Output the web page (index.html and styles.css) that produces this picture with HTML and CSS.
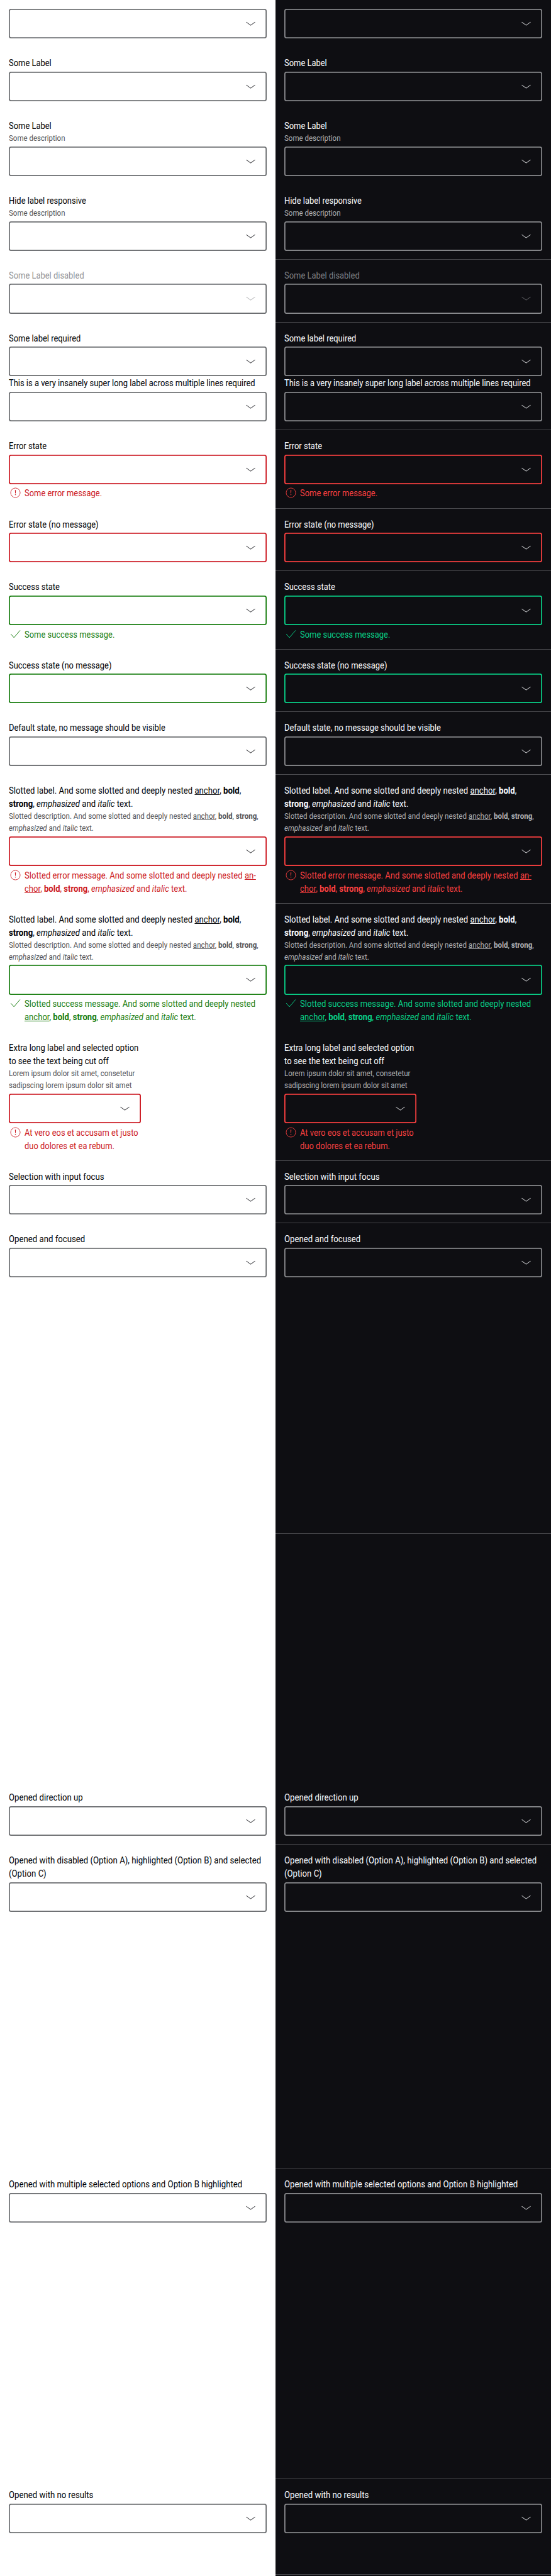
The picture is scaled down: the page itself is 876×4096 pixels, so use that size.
FILE: index.html
```
<!DOCTYPE html>
<html lang="en">
<head>
<meta charset="utf-8">
<title>Multi select states</title>
<link rel="stylesheet" href="styles.css">
</head>
<body>
<svg class="sprite" aria-hidden="true">
  <symbol id="chevron" viewBox="0 0 24 24"><path d="M4 9.2L12 15L20 9.2" fill="none" stroke="currentColor" stroke-width="1.2"/></symbol>
  <symbol id="error" viewBox="0 0 24 24"><circle cx="12" cy="12" r="8.6" fill="none" stroke="currentColor"/><path d="M11.2 7h1.6l-.3 6.2h-1z M11.2 14.8h1.6v1.6h-1.6z" fill="currentColor"/></symbol>
  <symbol id="check" viewBox="0 0 24 24"><path d="M3.7 11.6L9.3 18.1L20.4 5" fill="none" stroke="currentColor" stroke-width="1.1"/></symbol>
</svg>
<main class="board">
  <div class="column light" id="light">
    <section class="item"><div class="select"><svg class="icon"><use href="#chevron"/></svg></div></section>
    <section class="item"><p class="label">Some Label</p><div class="select"><svg class="icon"><use href="#chevron"/></svg></div></section>
    <section class="item"><p class="label">Some Label</p><p class="desc">Some description</p><div class="select"><svg class="icon"><use href="#chevron"/></svg></div></section>
    <section class="item line"><p class="label">Hide label responsive</p><p class="desc">Some description</p><div class="select"><svg class="icon"><use href="#chevron"/></svg></div></section>
    <section class="item line disabled"><p class="label">Some Label disabled</p><div class="select"><svg class="icon"><use href="#chevron"/></svg></div></section>
    <section class="item line"><p class="label">Some label required</p><div class="select"><svg class="icon"><use href="#chevron"/></svg></div><p class="label">This is a very insanely super long label across multiple lines required</p><div class="select"><svg class="icon"><use href="#chevron"/></svg></div></section>
    <section class="item line error"><p class="label">Error state</p><div class="select"><svg class="icon"><use href="#chevron"/></svg></div><div class="message"><svg class="icon"><use href="#error"/></svg><p class="text">Some error message.</p></div></section>
    <section class="item line error"><p class="label">Error state (no message)</p><div class="select"><svg class="icon"><use href="#chevron"/></svg></div></section>
    <section class="item line success"><p class="label">Success state</p><div class="select"><svg class="icon"><use href="#chevron"/></svg></div><div class="message"><svg class="icon"><use href="#check"/></svg><p class="text">Some success message.</p></div></section>
    <section class="item line success"><p class="label">Success state (no message)</p><div class="select"><svg class="icon"><use href="#chevron"/></svg></div></section>
    <section class="item line"><p class="label">Default state, no message should be visible</p><div class="select"><svg class="icon"><use href="#chevron"/></svg></div></section>
    <section class="item line error slotted">
      <p class="label">Slotted label. And some slotted and deeply nested <u>anchor</u>, <b>bold</b>,<br><b>strong</b>, <i>emphasized</i> and <i>italic</i> text.</p>
      <p class="desc">Slotted description. And some slotted and deeply nested <u>anchor</u>, <b>bold</b>, <b>strong</b>,<br><i>emphasized</i> and <i>italic</i> text.</p>
      <div class="select"><svg class="icon"><use href="#chevron"/></svg></div>
      <div class="message"><svg class="icon"><use href="#error"/></svg><p class="text">Slotted error message. And some slotted and deeply nested <u>an-<br>chor</u>, <b>bold</b>, <b>strong</b>, <i>emphasized</i> and <i>italic</i> text.</p></div>
    </section>
    <section class="item success slotted">
      <p class="label">Slotted label. And some slotted and deeply nested <u>anchor</u>, <b>bold</b>,<br><b>strong</b>, <i>emphasized</i> and <i>italic</i> text.</p>
      <p class="desc">Slotted description. And some slotted and deeply nested <u>anchor</u>, <b>bold</b>, <b>strong</b>,<br><i>emphasized</i> and <i>italic</i> text.</p>
      <div class="select"><svg class="icon"><use href="#chevron"/></svg></div>
      <div class="message"><svg class="icon"><use href="#check"/></svg><p class="text">Slotted success message. And some slotted and deeply nested<br><u>anchor</u>, <b>bold</b>, <b>strong</b>, <i>emphasized</i> and <i>italic</i> text.</p></div>
    </section>
    <section class="item line error narrow">
      <p class="label">Extra long label and selected option<br>to see the text being cut off</p>
      <p class="desc">Lorem ipsum dolor sit amet, consetetur<br>sadipscing lorem ipsum dolor sit amet</p>
      <div class="select"><svg class="icon"><use href="#chevron"/></svg></div>
      <div class="message"><svg class="icon"><use href="#error"/></svg><p class="text">At vero eos et accusam et justo<br>duo dolores et ea rebum.</p></div>
    </section>
    <section class="item line opened"><p class="label">Selection with input focus</p><div class="select"><svg class="icon"><use href="#chevron"/></svg></div></section>
    <section class="item line opened tall"><p class="label">Opened and focused</p><div class="select"><svg class="icon"><use href="#chevron"/></svg></div></section>
    <section class="item line opened tall up"><p class="label">Opened direction up</p><div class="select"><svg class="icon"><use href="#chevron"/></svg></div></section>
    <section class="item line opened taller"><p class="label">Opened with disabled (Option A), highlighted (Option B) and selected<br>(Option C)</p><div class="select"><svg class="icon"><use href="#chevron"/></svg></div></section>
    <section class="item line opened tall"><p class="label">Opened with multiple selected options and Option B highlighted</p><div class="select"><svg class="icon"><use href="#chevron"/></svg></div></section>
    <section class="item line opened last"><p class="label">Opened with no results</p><div class="select"><svg class="icon"><use href="#chevron"/></svg></div></section>
  </div>
</main>
<script src="theme.js"></script>
</body>
</html>
```
FILE: theme.js
```
// The dark column shows the same states as the light one.
const light = document.getElementById("light");
const dark = light.cloneNode(true);
dark.id = "dark";
dark.className = "column dark";
light.after(dark);
```
FILE: styles.css
```
html {
  font-size: 14.0125px;
}
body {
  margin: 0;
  font-family: Roboto, "Liberation Sans", sans-serif;
  background: #fff;
}
p {
  margin: 0;
}
.sprite {
  display: none;
}
.board {
  display: grid;
  grid-template-columns: minmax(0, 1fr) minmax(0, 1fr);
  height: 4096px;
  overflow: hidden;
}
.column {
  --border: #6b6d70;
  --text: #010205;
  --muted: #535457;
  --off: #949598;
  --off-icon: #b9babc;
  --chevron: #45464a;
  --error: #cc1922;
  --success: #197e10;
  --bg: #fff;
  --seam: #fff;
  background: var(--bg);
  color: var(--text);
}
.dark {
  --border: #88898c;
  --text: #fbfcff;
  --muted: #afb0b3;
  --off: #7c7d81;
  --off-icon: #56575b;
  --chevron: #c0c1c4;
  --error: #fc4040;
  --success: #09d087;
  --bg: #0e0e12;
  --seam: #49494d;
}
.item {
  --fit: 0.924;
  --fit-desc: 0.938;
  --fit-text: 0.924;
  box-sizing: border-box;
  padding: 1rem;
  display: flex;
  flex-direction: column;
  background: linear-gradient(var(--seam), var(--seam)) bottom / 100% 0 no-repeat;
}
.item.line {
  background-size: 100% 1px;
}
.slotted {
  --fit: 0.94;
  --fit-desc: 0.945;
  --fit-text: 0.934;
}
.opened {
  --fit: 0.943;
}
.label,
.desc,
.text {
  white-space: nowrap;
  transform: translateY(0.07rem) scaleX(var(--fit));
  transform-origin: left;
}
.desc {
  --fit: var(--fit-desc);
}
.text {
  --fit: var(--fit-text);
}
.label,
.text {
  font-size: 1rem;
  line-height: 1.5rem;
}
.desc {
  font-size: 0.875rem;
  line-height: 1.36rem;
  color: var(--muted);
}
.label u,
.desc u,
.text u {
  text-underline-offset: 0.1em;
  text-decoration-thickness: 1px;
}
.select {
  box-sizing: border-box;
  height: 3.375rem;
  padding-right: 1.0625rem;
  display: flex;
  align-items: center;
  justify-content: flex-end;
  border-radius: 0.25rem;
  color: var(--chevron);
  box-shadow: inset 0 0 0 0.125rem var(--border);
}
.label + .select,
.desc + .select {
  margin-top: 0.25rem;
}
.icon {
  width: 1.5rem;
  height: 1.5rem;
  flex: none;
}
.message {
  display: flex;
  gap: 0.25rem;
  margin-top: 0.25rem;
}
.error {
  --border: var(--error);
}
.error .message {
  color: var(--error);
}
.success {
  --border: var(--success);
}
.success .message {
  color: var(--success);
}
.disabled .label {
  color: var(--off);
}
.disabled .select {
  color: var(--off-icon);
}
.narrow .select {
  width: 15rem;
}
.narrow {
  --fit: 0.933;
}
.tall {
  height: 35.25rem;
}
.taller {
  height: 36.75rem;
}
.up {
  justify-content: flex-end;
}
.last {
  height: 10.87rem;
}
```
